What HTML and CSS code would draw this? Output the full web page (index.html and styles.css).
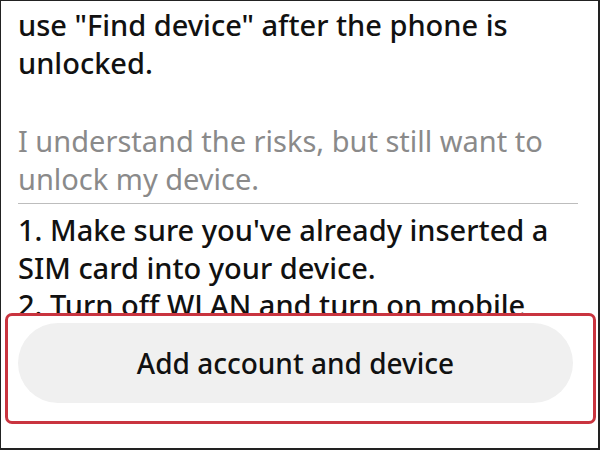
FILE: index.html
```html
<!DOCTYPE html>
<html lang="en">
<head>
  <meta charset="UTF-8">
  <meta name="viewport" content="width=device-width, initial-scale=1.0">
  <title>Unlock device</title>
  <link rel="stylesheet" href="styles.css">
</head>
<body>
  <div class="screen">
    <div class="content">
      <p class="text">use "Find device" after the phone is unlocked.</p>
      <p class="text muted">I understand the risks, but still want to unlock my device.</p>
      <div class="steps">
        <p class="text">1. Make sure you've already inserted a SIM card into your device.</p>
        <p class="text">2. Turn off WLAN and turn on mobile</p>
      </div>
    </div>

    <div class="footer">
      <button class="btn">Add account and device</button>
    </div>
  </div>
</body>
</html>
```

FILE: styles.css
```css
body {
  margin: 0;
  font-family: "Noto Sans", sans-serif;
  background-color: #fff;
}
.screen {
  box-sizing: border-box;
  width: 600px;
  height: 450px;
  border: 1.5px solid #222;
  border-bottom-width: 2px;
  border-right-width: 2px;
  display: flex;
  flex-direction: column;
  overflow: hidden;
}
.content {
  height: 312px;
  flex-shrink: 0;
  overflow: hidden;
  padding: 0 20px 0 17px;
}
.text {
  margin: 0;
  font-size: 29px;
  font-weight: 500;
  line-height: 37.5px;
  color: #111;
}
.text:first-child {
  margin-top: 5px;
}
.muted {
  font-weight: 400;
  color: #8a8a8a;
  margin-top: 41px;
  padding-bottom: 6px;
  border-bottom: 1.5px solid #bdbdbd;
}
.steps {
  padding-top: 2px;
}
.footer {
  margin: 0 2px 0 4px;
  padding: 7px 20px 18px 10px;
  border: 3px solid #c9343f;
  border-radius: 7px;
}
.btn {
  display: block;
  width: 100%;
  height: 80px;
  border: none;
  border-radius: 40px;
  background-color: #f0f0f0;
  font-family: inherit;
  font-size: 28px;
  font-weight: 500;
  color: #111;
}
```
